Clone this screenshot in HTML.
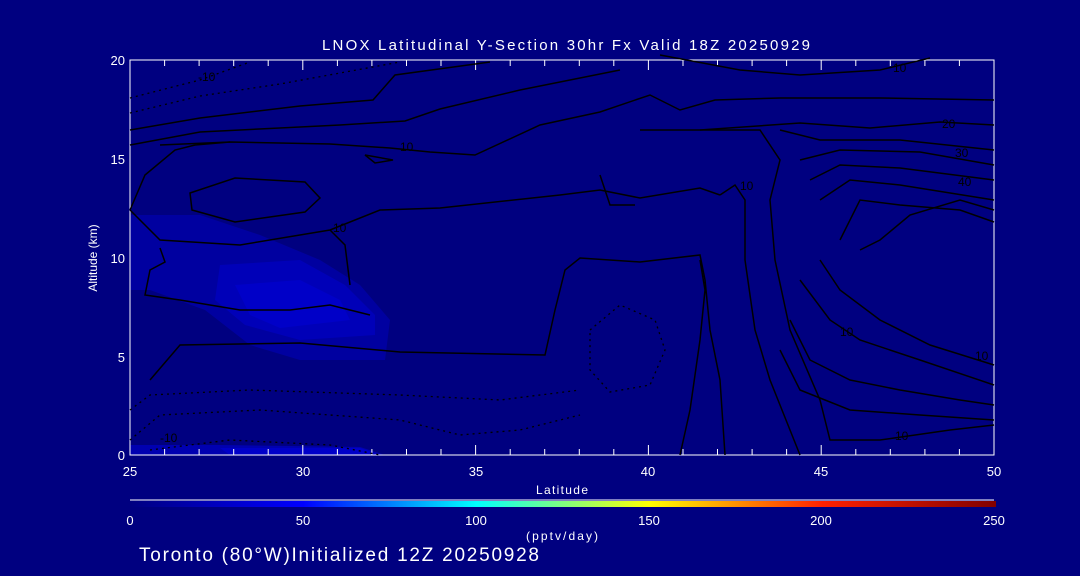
<!DOCTYPE html>
<html><head><meta charset="utf-8"><style>
html,body{margin:0;padding:0;background:#000080;width:1080px;height:576px;overflow:hidden}
svg text{font-family:"Liberation Sans",sans-serif;fill:#fff}
</style></head><body>
<svg width="1080" height="576" viewBox="0 0 1080 576" xmlns="http://www.w3.org/2000/svg">
<defs>
<linearGradient id="cb" x1="0" x2="1" y1="0" y2="0">
<stop offset="0" stop-color="#000080"/>
<stop offset="0.2" stop-color="#0000ff"/>
<stop offset="0.4" stop-color="#00ffff"/>
<stop offset="0.6" stop-color="#ffff00"/>
<stop offset="0.8" stop-color="#ff2000"/>
<stop offset="1" stop-color="#800000"/>
</linearGradient>
</defs>
<rect width="1080" height="576" fill="#000080"/>
<path d="M130 215 L200 215 L260 235 L320 260 L360 285 L390 320 L385 360 L300 360 L250 345 L205 310 L150 290 L130 290Z" fill="#0000a0"/>
<path d="M220 265 L300 260 L345 285 L375 315 L375 335 L300 340 L245 325 L215 300Z" fill="#0000b8"/>
<path d="M235 285 L300 280 L340 300 L350 320 L280 328 L250 315Z" fill="#0000c8"/>
<path d="M130 445 L220 445 L360 447 L385 455 L130 455Z" fill="#0000b0"/>
<path d="M220 448 L360 448 L380 455 L230 455Z" fill="#0000c8"/>
<g stroke="#fff" stroke-width="1" fill="none">
<path d="M130 60 H994 V455 H130Z"/>
<path d="M130 455 v-6 M164.6 455 v-6 M199.1 455 v-6 M233.7 455 v-6 M268.2 455 v-6 M302.8 455 v-10 M337.4 455 v-6 M371.9 455 v-6 M406.5 455 v-6 M441 455 v-6 M475.6 455 v-10 M510.2 455 v-6 M544.7 455 v-6 M579.3 455 v-6 M613.8 455 v-6 M648.4 455 v-10 M683 455 v-6 M717.5 455 v-6 M752.1 455 v-6 M786.6 455 v-6 M821.2 455 v-10 M855.8 455 v-6 M890.3 455 v-6 M924.9 455 v-6 M959.4 455 v-6"/>
<path d="M130 60 v6 M164.6 60 v6 M199.1 60 v6 M233.7 60 v6 M268.2 60 v6 M302.8 60 v10 M337.4 60 v6 M371.9 60 v6 M406.5 60 v6 M441 60 v6 M475.6 60 v10 M510.2 60 v6 M544.7 60 v6 M579.3 60 v6 M613.8 60 v6 M648.4 60 v10 M683 60 v6 M717.5 60 v6 M752.1 60 v6 M786.6 60 v6 M821.2 60 v10 M855.8 60 v6 M890.3 60 v6 M924.9 60 v6 M959.4 60 v6"/>
</g>
<g stroke="#000" stroke-width="1.5" fill="none">
<path d="M130 130 L200 118 L300 106 L373 100 L395 75 L490 62"/>
<path d="M130 145 L200 132 L340 125 L405 121 L440 109 L520 90 L620 70"/>
<path d="M160 145 L230 142 L330 144 L390 148 L430 152 L475 155 L540 125 L600 112 L650 95 L680 110 L715 100 L780 98 L880 98 L994 100"/>
<path d="M130 210 L145 175 L175 150 L195 145 L230 142"/>
<path d="M130 210 L160 240 L240 245 L330 230 L380 210 L440 208 L560 195 L600 190 L640 198 L700 188 L720 195"/>
<path d="M190 193 L235 178 L305 182 L320 198 L305 212 L235 222 L192 210Z"/>
<path d="M365 155 L393 160 L375 163 Z"/>
<path d="M160 248 L165 262 L150 270 L145 295 L180 300 L240 310 L290 310 L330 305 L370 315"/>
<path d="M150 380 L180 345 L300 343 L400 352 L545 355 L555 310 L565 270 L580 258 L640 262 L700 255 L705 280 L710 330 L720 380 L725 455"/>
<path d="M330 230 L345 245 L350 285"/>
<path d="M680 455 L690 410 L700 340 L705 290 L700 260"/>
<path d="M720 195 L735 185 L745 200 L745 260 L755 330 L770 380 L790 430 L800 455"/>
<path d="M640 130 L760 130 L780 160 L770 200 L775 260 L790 330 L820 400 L830 440 L880 440 L950 430 L994 425"/>
<path d="M700 130 L800 123 L870 128 L940 122 L994 125"/>
<path d="M780 130 L820 140 L900 140 L994 150"/>
<path d="M800 160 L840 150 L920 152 L994 165"/>
<path d="M810 180 L840 165 L900 168 L994 180"/>
<path d="M820 200 L850 180 L900 185 L994 200"/>
<path d="M840 240 L860 200 L900 205 L960 210 L994 222"/>
<path d="M860 250 L880 240 L910 215 L960 200 L994 210"/>
<path d="M820 260 L840 290 L880 320 L930 345 L994 365"/>
<path d="M800 280 L830 320 L860 340 L920 360 L994 385"/>
<path d="M790 320 L810 360 L850 380 L900 390 L960 400 L994 405"/>
<path d="M780 350 L800 390 L850 410 L920 415 L994 420"/>
<path d="M660 55 L740 70 L800 75 L880 70 L930 58"/>
<path d="M600 175 L610 205 L635 205"/>
</g>
<g stroke="#000" stroke-width="1.3" fill="none" stroke-dasharray="2,4">
<path d="M130 98 L200 80 L250 62"/>
<path d="M130 113 L200 96 L280 84 L400 62"/>
<path d="M590 330 L620 305 L655 320 L665 350 L650 385 L610 392 L590 370Z"/>
<path d="M130 410 L150 395 L250 390 L400 395 L500 400 L580 390"/>
<path d="M130 440 L160 415 L260 410 L400 420 L460 435 L520 430 L580 415"/>
<path d="M150 450 L230 440 L330 445 L380 455"/>
</g>
<g font-size="12">
<text x="198" y="81" style="fill:#000">-10</text>
<text x="400" y="151" style="fill:#000">10</text>
<text x="333" y="232" style="fill:#000">10</text>
<text x="893" y="72" style="fill:#000">10</text>
<text x="942" y="128" style="fill:#000">20</text>
<text x="955" y="157" style="fill:#000">30</text>
<text x="958" y="186" style="fill:#000">40</text>
<text x="840" y="336" style="fill:#000">10</text>
<text x="975" y="360" style="fill:#000">10</text>
<text x="895" y="440" style="fill:#000">10</text>
<text x="740" y="190" style="fill:#000">10</text>
<text x="160" y="442" style="fill:#000">-10</text>
</g>
<text x="322" y="50" font-size="15" textLength="488" lengthAdjust="spacing">LNOX Latitudinal Y-Section 30hr  Fx Valid 18Z 20250929</text>
<g font-size="13" text-anchor="end">
<text x="125" y="65">20</text><text x="125" y="164">15</text><text x="125" y="263">10</text><text x="125" y="362">5</text><text x="125" y="460">0</text>
</g>
<text transform="translate(97,258) rotate(-90)" font-size="12" text-anchor="middle">Altitude (km)</text>
<g font-size="13" text-anchor="middle">
<text x="130" y="476">25</text><text x="303" y="476">30</text><text x="476" y="476">35</text><text x="648" y="476">40</text><text x="821" y="476">45</text><text x="994" y="476">50</text>
</g>
<text x="536" y="494" font-size="12" textLength="52" lengthAdjust="spacing">Latitude</text>
<line x1="130" y1="500" x2="994" y2="500" stroke="#fff" stroke-width="1"/>
<rect x="130" y="501" width="866" height="6" fill="url(#cb)"/>
<g font-size="13" text-anchor="middle">
<text x="130" y="525">0</text><text x="303" y="525">50</text><text x="476" y="525">100</text><text x="649" y="525">150</text><text x="821" y="525">200</text><text x="994" y="525">250</text>
</g>
<text x="526" y="540" font-size="12" textLength="72" lengthAdjust="spacing">(pptv/day)</text>
<text x="139" y="561" font-size="19" textLength="400" lengthAdjust="spacing">Toronto (80°W)Initialized 12Z 20250928</text>
</svg>
</body></html>
